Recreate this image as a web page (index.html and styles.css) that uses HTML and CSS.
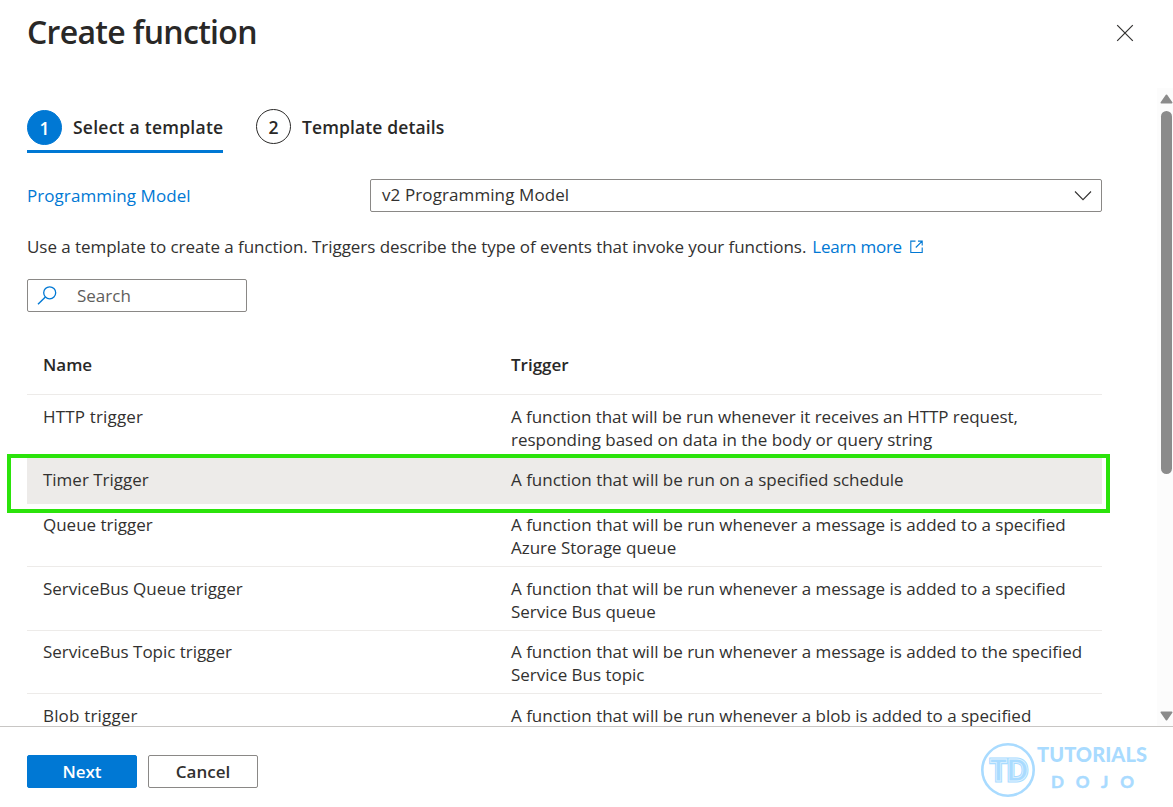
FILE: index.html
```html
<!DOCTYPE html>
<html lang="en">
<head>
<meta charset="utf-8">
<title>Create function</title>
<link rel="stylesheet" href="styles.css">
</head>
<body>
<div class="panel">
  <header class="header">
    <h1 class="title">Create function</h1>
    <svg class="close" viewBox="0 0 18 18" width="18" height="18"><path d="M1.2 1.2 16.8 16.8M16.8 1.2 1.2 16.8" fill="none" stroke="#323130" stroke-width="1.2"/></svg>
  </header>
  <div class="body">
    <main class="content">
      <nav class="steps">
        <div class="step active"><span class="num">1</span><span class="step-one">Select a template</span></div>
        <div class="step"><span class="num">2</span><span class="step-two">Template details</span></div>
      </nav>
      <div class="field">
        <span class="label">Programming Model</span>
        <div class="select"><span class="value">v2 Programming Model</span>
          <svg viewBox="0 0 18 11" width="18" height="11"><path d="M1 1.5 9 9.7 17 1.5" fill="none" stroke="#323130" stroke-width="1.1"/></svg>
        </div>
      </div>
      <p class="intro"><span class="intro-text">Use a template to create a function. Triggers describe the type of events that invoke your functions.</span><a class="learn">Learn more</a><svg viewBox="0 0 13 13" width="13" height="13"><path d="M5.5 1.1H.8v11.4h11.4V7.5M8 1.1h4.2v4.3M12.2 1.1 5.8 7.5" fill="none" stroke="#0078d4" stroke-width="1.1"/></svg></p>
      <div class="search">
        <svg viewBox="0 0 20 20" width="20" height="20"><circle cx="12.7" cy="6.8" r="6" fill="none" stroke="#0078d4" stroke-width="1.3"/><path d="M8.4 11 1 18.3" stroke="#0078d4" stroke-width="1.4"/></svg>
        <span class="placeholder">Search</span>
      </div>
      <div class="table">
        <div class="row head"><span class="h-name">Name</span><span class="h-trigger">Trigger</span></div>
        <div class="row"><span class="wide">HTTP trigger</span><span><span class="tight">A function that will be run whenever it receives an HTTP request,</span><br>responding based on data in the body or query string</span></div>
        <div class="row selected"><span>Timer Trigger</span><span>A function that will be run on a specified schedule</span></div>
        <div class="row raised"><span>Queue trigger</span><span>A function that will be run whenever a message is added to a specified<br>Azure Storage queue</span></div>
        <div class="row tall"><span>ServiceBus Queue trigger</span><span>A function that will be run whenever a message is added to a specified<br>Service Bus queue</span></div>
        <div class="row raised"><span>ServiceBus Topic trigger</span><span>A function that will be run whenever a message is added to the specified<br>Service Bus topic</span></div>
        <div class="row"><span class="wide">Blob trigger</span><span>A function that will be run whenever a blob is added to a specified</span></div>
      </div>
    </main>
    <div class="scrollbar">
      <svg viewBox="0 0 13 10" width="13" height="10"><path d="M6.5 1.3 11.7 8.7H1.3Z" fill="#8b8b8b" stroke="#8b8b8b" stroke-width="1.6" stroke-linejoin="round"/></svg>
      <div class="thumb"></div>
      <svg class="down" viewBox="0 0 13 10" width="13" height="10"><path d="M6.5 8.7 11.7 1.3H1.3Z" fill="#8b8b8b" stroke="#8b8b8b" stroke-width="1.6" stroke-linejoin="round"/></svg>
    </div>
  </div>
  <footer class="footer">
    <button class="btn primary">Next</button>
    <button class="btn">Cancel</button>
    <svg class="logo" viewBox="0 0 170 58" width="170" height="58">
      <circle cx="28" cy="29" r="25.7" fill="none" stroke="#a9dbff" stroke-width="2.6"/>
      <text class="mark" x="10" y="39.5" textLength="38" lengthAdjust="spacingAndGlyphs">TD</text>
      <text class="mark-inner" x="10" y="39.5" textLength="38" lengthAdjust="spacingAndGlyphs">TD</text>
      <text class="word" x="57" y="21.3" textLength="110" lengthAdjust="spacing">TUTORIALS</text>
      <text class="sub" x="71" y="47" textLength="83" lengthAdjust="spacing">DOJO</text>
    </svg>
  </footer>
  <div class="highlight"></div>
</div>
</body>
</html>
```
FILE: styles.css
```css
* { box-sizing: border-box; }
body { margin: 0; background: #fff; color: #323130; font: 17px/23px "Open Sans", "Noto Sans", sans-serif; }
.panel { position: relative; width: 1173px; height: 807px; display: flex; flex-direction: column; overflow: hidden; white-space: nowrap; }
.header { height: 88px; flex: none; display: flex; justify-content: space-between; padding: 12px 39px 0 27px; }
.title { margin: 0; font-size: 32px; line-height: 40px; font-weight: 600; letter-spacing: -0.68px; color: #292827; }
.close { margin-top: 12px; }
.body { height: 638px; flex: none; display: flex; overflow: hidden; }
.content { width: 1157px; padding: 21px 55px 0 27px; }
.steps { display: flex; gap: 33px; height: 44px; font-size: 17.5px; font-weight: 600; color: #292827; }
.step { display: flex; gap: 11px; height: 44px; line-height: 36px; }
.step.active { border-bottom: 3px solid #0078d4; }
.step-one { width: 150px; letter-spacing: 0.25px; }
.step-two { letter-spacing: 0.12px; }
.num { width: 35px; height: 35px; border: 1px solid #292827; border-radius: 50%; text-align: center; line-height: 34px; }
.active .num { margin-top: 1px; background: #0078d4; border-color: #0078d4; color: #fff; }
.field { display: flex; margin-top: 26px; height: 33px; align-items: center; }
.label { width: 343px; color: #0078d4; letter-spacing: 0.06px; }
.select { flex: 1; height: 33px; border: 1px solid #8a8886; border-radius: 2px; display: flex; align-items: center; justify-content: space-between; padding: 0 9px 0 11px; }
.value { margin-bottom: 2px; letter-spacing: 0.1px; }
.intro { margin: 23px 0 0; height: 23px; display: flex; align-items: center; }
.intro-text { letter-spacing: -0.055px; }
.learn { color: #0078d4; margin: 0 8px 0 6px; letter-spacing: -0.25px; }
.search { margin-top: 21px; width: 220px; height: 33px; border: 1px solid #8a8886; border-radius: 2px; display: flex; align-items: center; padding-left: 9px; gap: 20px; color: #605e5c; }
.table { margin-top: 23px; }
.row { height: 63px; display: grid; grid-template-columns: 468px 1fr; padding: 10px 0 0 16px; border-bottom: 1px solid #edebe9; letter-spacing: -0.015px; }
.row.head { height: 60px; padding-top: 18px; font-weight: 600; color: #292827; }
.row.selected { height: 46px; background: #edebe9; }
.row.raised { padding-top: 9px; }
.row.tall { height: 64px; }
.wide { letter-spacing: 0.17px; }
.tight { letter-spacing: -0.06px; }
.scrollbar { width: 16px; height: 638px; background: #fcfcfc; padding: 6px 0 5px 3px; display: flex; flex-direction: column; }
.thumb { width: 11px; height: 363px; margin: 7px 0 0 1px; border-radius: 6px; background: #8b8b8b; }
.scrollbar svg { flex: none; }
.down { margin-top: auto; }
.footer { flex: 1; border-top: 1px solid #c8c6c4; display: flex; padding: 28px 0 0 27px; gap: 11px; }
.btn { width: 110px; height: 33px; padding: 0; border: 1px solid #8a8886; border-radius: 2px; background: #fff; color: #323130; font: 600 17px/23px "Open Sans", "Noto Sans", sans-serif; }
.btn.primary { background: #0078d4; border-color: #0078d4; color: #fff; }
.logo { margin: -14px 0 0 711px; flex: none; }
.logo text { font-family: Lato, sans-serif; font-weight: 900; fill: #a9dbff; }
.logo .mark { font-size: 31px; stroke: #a9dbff; stroke-width: 3; }
.logo .mark-inner { font-size: 31px; fill: none; stroke: #dff2ff; stroke-width: 0.8; }
.logo .word { font-size: 20px; }
.logo .sub { font-size: 17px; font-weight: 700; stroke: #a9dbff; stroke-width: 0.5; }
.highlight { position: absolute; left: 7px; top: 454px; width: 1103px; height: 59px; border: 4px solid #2be30b; box-shadow: inset 0 -5px #fff; }
```
